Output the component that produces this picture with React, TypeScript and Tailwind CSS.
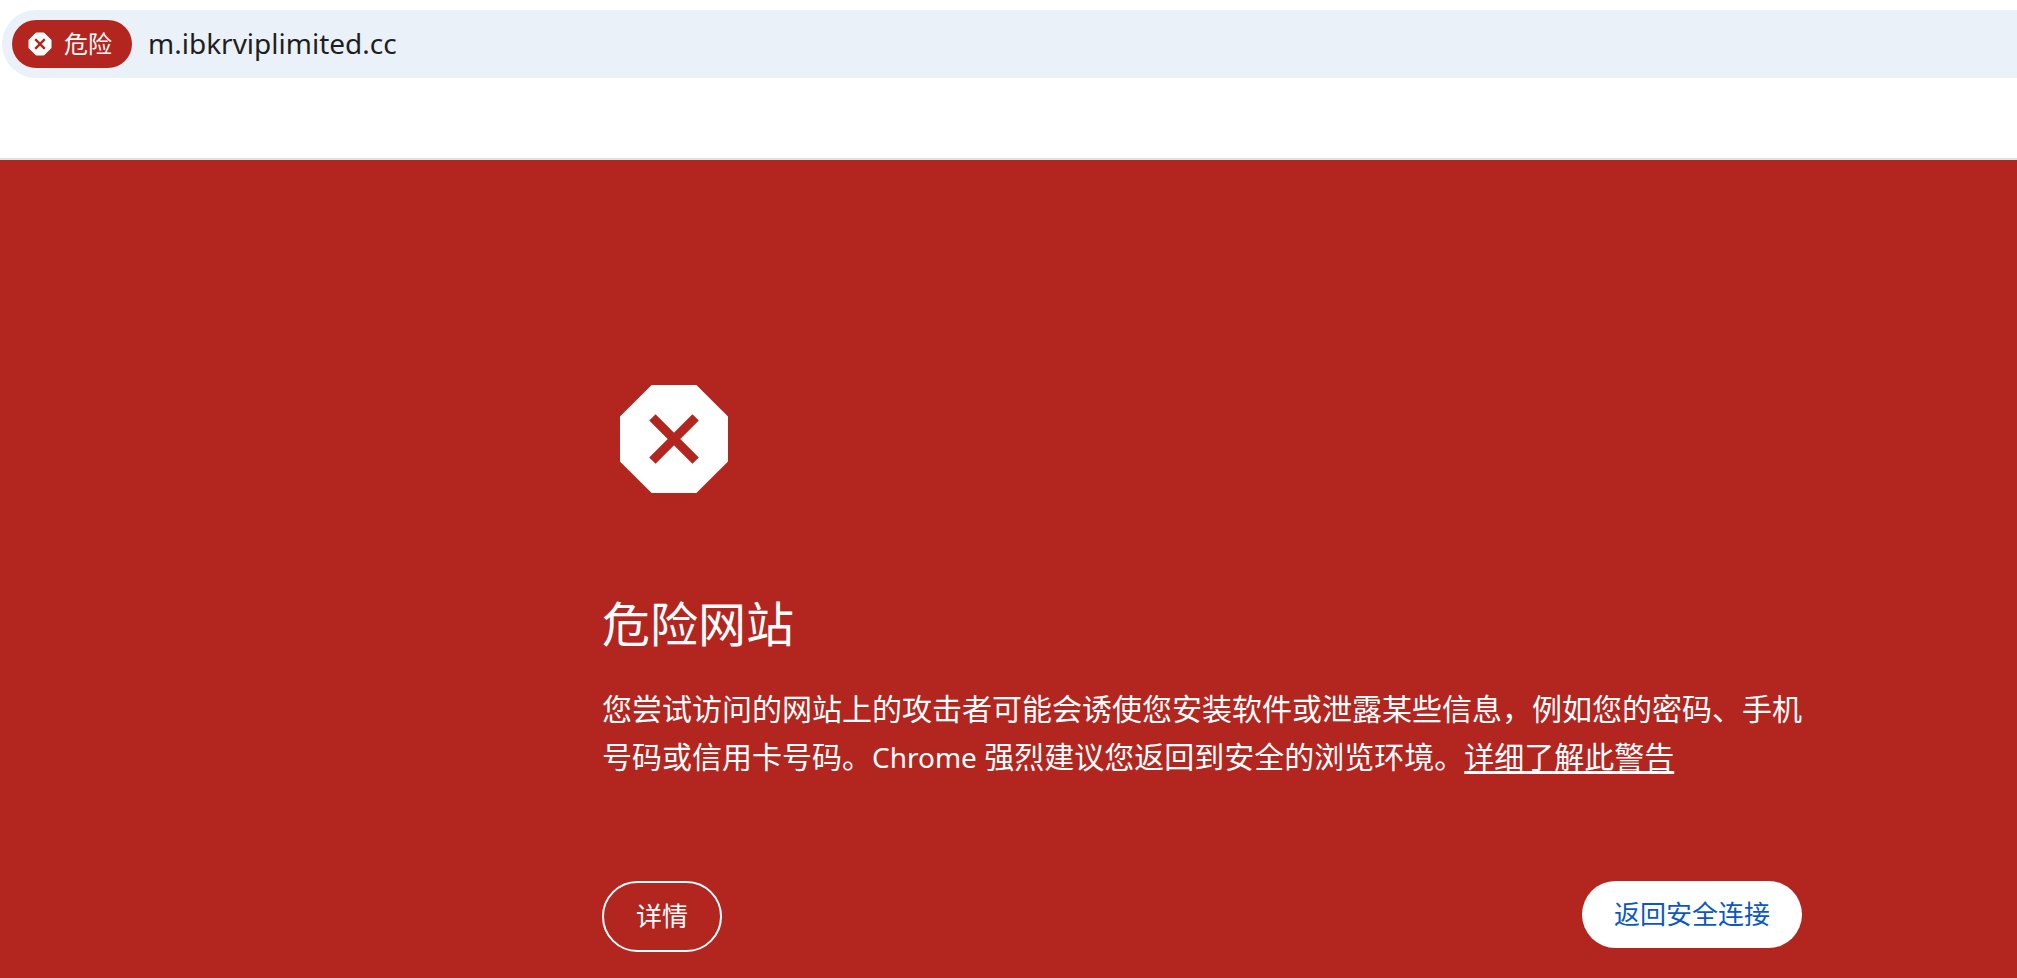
import React from "react";

function DangerIcon({ className }: { className: string }) {
  return (
    <svg viewBox="0 0 24 24" className={className} aria-hidden="true">
      <path
        fill="#fff"
        d="M15.73 3H8.27L3 8.27v7.46L8.27 21h7.46L21 15.73V8.27z"
      />
      <path stroke="#b3261f" strokeWidth="1.5" d="M8.4 8.4l7.2 7.2M15.6 8.4l-7.2 7.2" />
    </svg>
  );
}

function ChipIcon() {
  return (
    <svg viewBox="0 0 24 24" className="size-6" aria-hidden="true">
      <path
        fill="#fff"
        stroke="#fff"
        strokeWidth="3"
        strokeLinejoin="round"
        d="M8.6 2h6.8L22 8.6v6.8L15.4 22H8.6L2 15.4V8.6z"
      />
      <path stroke="#b3261f" strokeWidth="2.4" d="M7.2 7.2l9.6 9.6M16.8 7.2l-9.6 9.6" />
    </svg>
  );
}

function AddressBar() {
  return (
    <header className="border-b-2 border-[#e1e1e1] bg-white pt-2.5 pb-20 pl-0.5">
      <div className="flex h-17 items-center gap-4 rounded-l-full bg-[#ebf1f9] pl-2.5">
        <button
          type="button"
          className="flex h-12 shrink-0 items-center gap-3 rounded-full bg-[#b3261f] pr-5 pl-4 text-2xl leading-6 text-white"
        >
          <ChipIcon />
          <span>危险</span>
        </button>
        <input
          type="text"
          aria-label="地址"
          defaultValue="m.ibkrviplimited.cc"
          className="h-12 min-w-0 flex-1 bg-transparent pb-0.5 text-[28px] text-[#1f1f1f] outline-none"
        />
      </div>
    </header>
  );
}

export default function App() {
  return (
    <div className="flex min-h-screen flex-col bg-[#b3261f] font-['Noto_Sans','Noto_Sans_CJK_SC',sans-serif]">
      <AddressBar />
      <main className="pt-[207px] pr-[215px] pb-6 pl-[602px] text-white">
        <DangerIcon className="size-36" />
        <h1 className="mt-20 text-5xl leading-[66px]">危险网站</h1>
        <p className="mt-7 text-[30px] leading-[48px]">
          您尝试访问的网站上的攻击者可能会诱使您安装软件或泄露某些信息，例如您的密码、手机号码或信用卡号码。
          <span className="text-[28px]">Chrome </span>
          强烈建议您返回到安全的浏览环境。
          <a href="#learn-more" className="underline decoration-[3px] underline-offset-[3px]">
            详细了解此警告
          </a>
        </p>
        <div className="mt-[100px] flex items-start justify-between">
          <button
            type="button"
            className="rounded-full border-2 border-white px-8 py-4 text-[26px] leading-[35px]"
          >
            详情
          </button>
          <button
            type="button"
            className="rounded-full bg-white px-8 py-4 text-[26px] leading-[35px] text-[#0b57c4]"
          >
            返回安全连接
          </button>
        </div>
      </main>
    </div>
  );
}
